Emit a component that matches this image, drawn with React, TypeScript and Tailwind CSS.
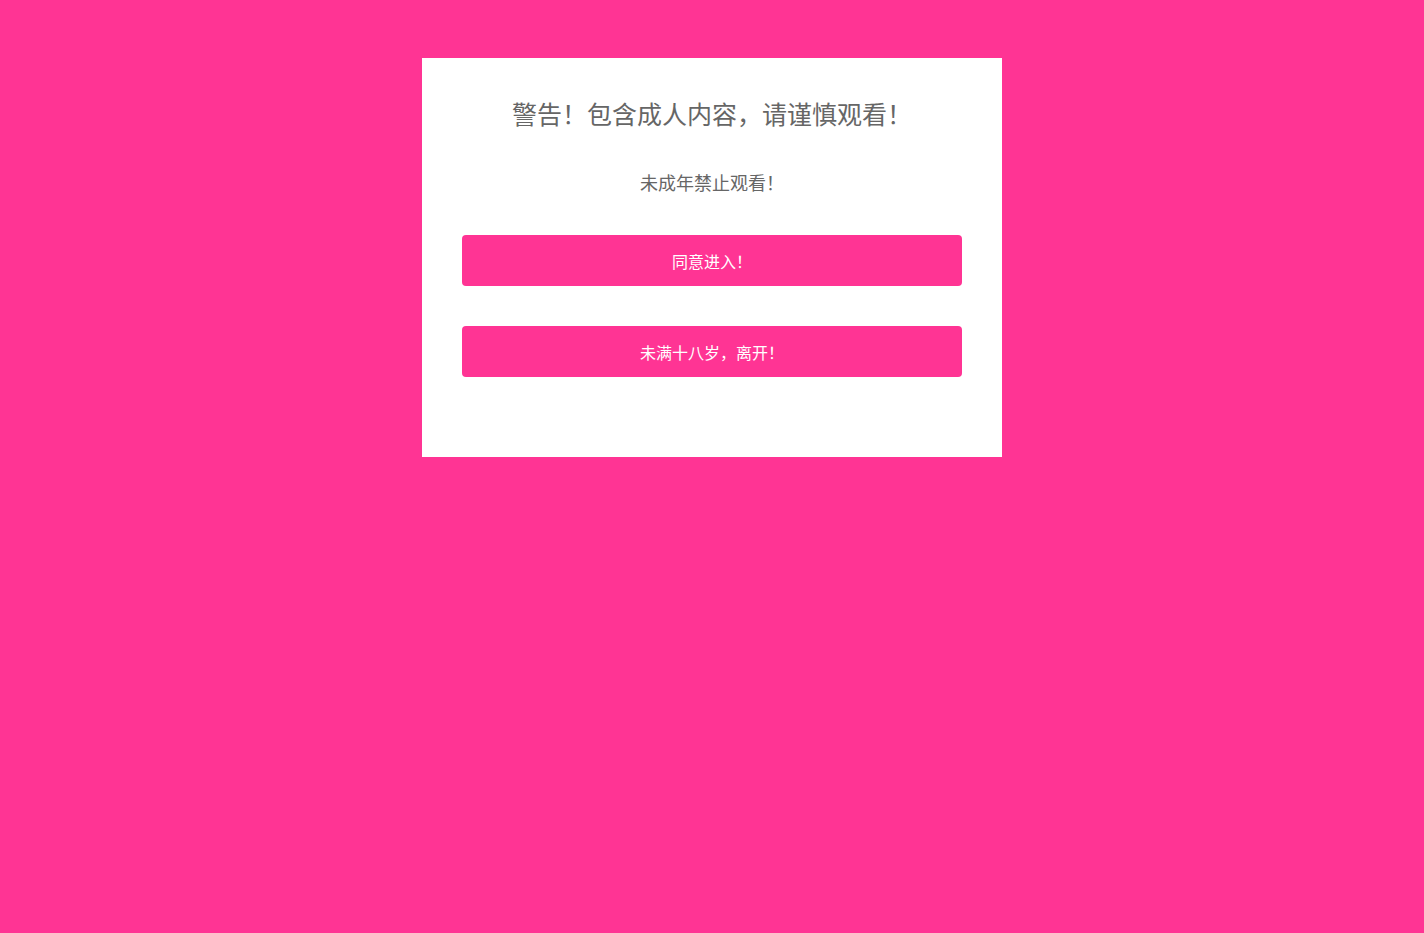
export default function App() {
  const font = { fontFamily: '"Noto Sans CJK SC", "Liberation Sans", sans-serif' };
  return (
    <div className="min-h-[933px] w-full bg-[#ff3494] pt-[58px]" style={font}>
      <div className="mx-auto w-[580px] bg-white px-10 pt-[38px] pb-20">
        <h1 className="text-center text-[25px] leading-[34px] font-normal text-[#666]">
          警告！包含成人内容，请谨慎观看！
        </h1>
        <p className="mt-[39px] text-center text-[18px] leading-[26px] text-[#666]">
          未成年禁止观看！
        </p>
        <button className="mt-[40px] block h-[51px] w-full rounded-[4px] bg-[#ff3494] text-[16px] text-white">
          同意进入！
        </button>
        <button className="mt-10 block h-[51px] w-full rounded-[4px] bg-[#ff3494] text-[16px] text-white">
          未满十八岁，离开！
        </button>
      </div>
    </div>
  );
}
